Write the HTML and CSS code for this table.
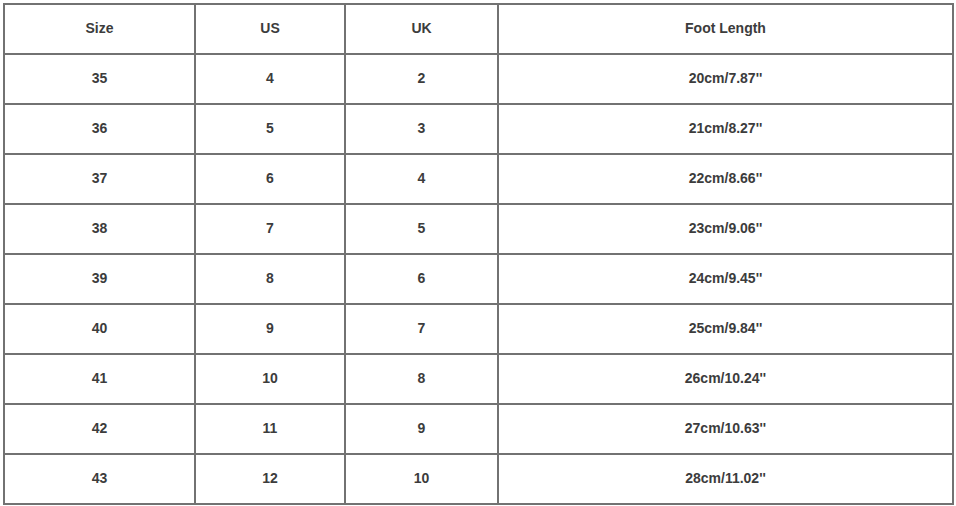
FILE: index.html
```html
<!DOCTYPE html>
<html>
<head>
<meta charset="utf-8">
<link rel="stylesheet" href="styles.css">
</head>
<body>
<table class="size-chart">
  <colgroup>
    <col class="c1"><col class="c2"><col class="c3"><col class="c4">
  </colgroup>
  <tr><td>Size</td><td>US</td><td>UK</td><td>Foot Length</td></tr>
  <tr><td>35</td><td>4</td><td>2</td><td>20cm/7.87''</td></tr>
  <tr><td>36</td><td>5</td><td>3</td><td>21cm/8.27''</td></tr>
  <tr><td>37</td><td>6</td><td>4</td><td>22cm/8.66''</td></tr>
  <tr><td>38</td><td>7</td><td>5</td><td>23cm/9.06''</td></tr>
  <tr><td>39</td><td>8</td><td>6</td><td>24cm/9.45''</td></tr>
  <tr><td>40</td><td>9</td><td>7</td><td>25cm/9.84''</td></tr>
  <tr><td>41</td><td>10</td><td>8</td><td>26cm/10.24''</td></tr>
  <tr><td>42</td><td>11</td><td>9</td><td>27cm/10.63''</td></tr>
  <tr><td>43</td><td>12</td><td>10</td><td>28cm/11.02''</td></tr>
</table>
</body>
</html>
```
FILE: styles.css
```css
html, body {
  margin: 0;
  padding: 0;
  background: #fff;
}
body {
  padding: 3px 0 0 3px;
}
.size-chart {
  border-collapse: collapse;
  table-layout: fixed;
  width: 949px;
  font-family: "Liberation Sans", Arial, sans-serif;
  font-size: 14px;
  font-weight: bold;
  color: #3c3c3c;
}
.size-chart .c1 { width: 191px; }
.size-chart .c2 { width: 150px; }
.size-chart .c3 { width: 153px; }
.size-chart .c4 { width: 455px; }
.size-chart td {
  border: 2px solid #727272;
  height: 50px;
  padding: 0 0 3px 0;
  text-align: center;
  vertical-align: middle;
  box-sizing: border-box;
}
```
